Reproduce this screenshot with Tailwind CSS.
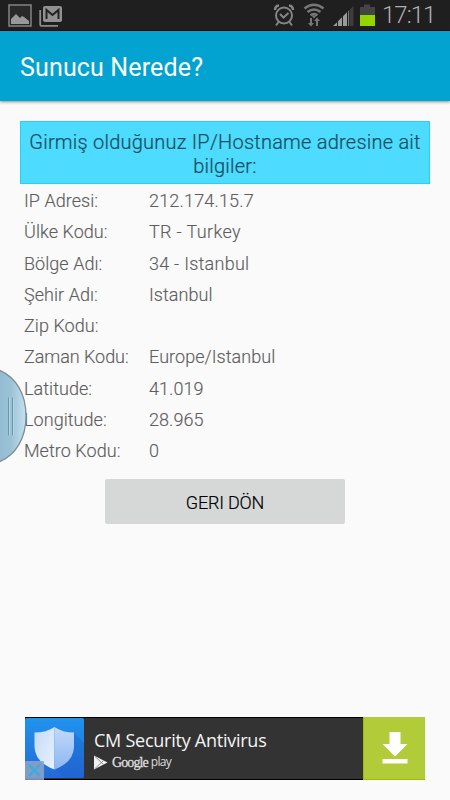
<!DOCTYPE html>
<html lang="tr">
<head>
    <meta charset="UTF-8">
    <meta name="viewport" content="width=device-width, initial-scale=1.0">
    <title>Sunucu Nerede?</title>
    <script src="https://cdn.jsdelivr.net/npm/@tailwindcss/browser@4"></script>
</head>
<body class="relative flex flex-col w-[450px] h-[800px] overflow-hidden bg-[#fafafa] font-['Roboto',sans-serif]">
    <!-- Status bar -->
    <div class="flex items-start justify-between h-[31px] shrink-0 bg-[#1f1f1f] border-b border-[#1c1010] pl-2">
        <div class="flex gap-[7px] pt-1">
            <svg class="w-6 h-[23px]" viewBox="0 0 24 23">
                <rect x="1" y="1" width="22" height="21" fill="#292929" stroke="#7d7d7d" stroke-width="1.6"/>
                <path d="M3 20v-5l3-3 2-2 4 4 2-2 2 1 5 4v3z" fill="#999"/>
            </svg>
            <svg class="w-[23px] h-[21px] mt-0.5" viewBox="0 0 23 21">
                <path d="M1.2 4v14.500q0 1.300 1.300 1.300H19" fill="none" stroke="#8c8c8c" stroke-width="1.8"/>
                <rect x="4" y="0" width="19" height="16" rx="2" fill="#929292"/>
                <path d="M7.500 13V4l6 5 6-5v9" fill="none" stroke="#222" stroke-width="2"/>
            </svg>
        </div>
        <div class="flex">
            <svg class="w-[104px] h-[30px]" viewBox="272 0 104 30">
                <g fill="none" stroke="#858585" stroke-width="2">
                    <circle cx="284" cy="15.500" r="8"/>
                    <path d="M280 14l3.500 3.500 5-4.500M278.500 22l-2.500 3.500M289.500 22l2.500 3.500"/>
                    <path d="M275 10q0-4 4-4.500M293 10q0-4-4-4.500" stroke-width="2.400"/>
                </g>
                <g fill="none" stroke="#777" stroke-width="2.600">
                    <path d="M304.500 8.500q9.500-7.500 19 0M307.500 12q6.500-5 13 0M310.500 15.300q3.500-2.500 7 0"/>
                </g>
                <path d="M311.500 15.500h5l-2.500 3zM310 18h2v5h2l-3 3.500-3-3.500h2zM316 26v-5h-2l3-3.500 3 3.500h-2v5z" fill="#777"/>
                <path d="M333 26l4-3.800V26zM338 26v-4.800l4-4V26zM343 26v-9.800l4-4V26z" fill="#999"/>
                <path d="M348 26V11.200l1-.8V26z" fill="#777"/>
                <path d="M349.500 26V10l4-4v20z" fill="#3d3d3d"/>
                <path d="M360 15V7h4V4.500h6V7h5v8z" fill="#444"/>
                <path d="M360 15h15v11h-15z" fill="#94d500"/>
            </svg>
            <span class="ml-[6px] w-[68px] pt-px text-[24px] leading-[29px] font-light tracking-[-1px] text-[#b0b0b0] whitespace-nowrap">17:11</span>
        </div>
    </div>

    <!-- Action bar -->
    <header class="flex items-center h-[70px] shrink-0 bg-[#02a3d0] pl-[20px] pt-1 shadow-[0_1px_3px_rgba(0,0,0,0.45)]">
        <h1 class="text-[25px] text-white whitespace-nowrap tracking-[0.15px]">Sunucu Nerede?</h1>
    </header>

    <!-- Lookup result -->
    <main class="flex flex-col px-5 pt-5">
        <div class="h-[63px] bg-[#4ddbff] border border-[#22d3f8] pt-[8px] text-center text-[20px] leading-[24px] font-light tracking-[0.23px] text-[#174f5c] [-webkit-text-stroke:0.2px_#174f5c] whitespace-nowrap">
            Girmiş olduğunuz IP/Hostname adresine ait<br>bilgiler:
        </div>
        <dl class="grid grid-cols-[125px_1fr] auto-rows-[31.25px] items-center pl-1 pt-px text-[18px] font-light tracking-[0.05px] text-[#5e5e5e] [-webkit-text-stroke:0.15px_#5e5e5e] whitespace-nowrap">
            <dt>IP Adresi:</dt><dd class="tracking-[0.18px]">212.174.15.7</dd>
            <dt>Ülke Kodu:</dt><dd class="tracking-[0.35px]">TR - Turkey</dd>
            <dt>Bölge Adı:</dt><dd class="tracking-[0.25px]">34 - Istanbul</dd>
            <dt>Şehir Adı:</dt><dd>Istanbul</dd>
            <dt>Zip Kodu:</dt><dd></dd>
            <dt class="tracking-[-0.05px]">Zaman Kodu:</dt><dd>Europe/Istanbul</dd>
            <dt>Latitude:</dt><dd>41.019</dd>
            <dt>Longitude:</dt><dd>28.965</dd>
            <dt>Metro Kodu:</dt><dd>0</dd>
        </dl>
        <button class="self-center mt-[13px] w-60 h-[45px] rounded-[2px] bg-[#d6d8d7] pt-0.5 text-[18px] font-light tracking-[-0.2px] text-black [-webkit-text-stroke:0.2px_#000]">GERI DÖN</button>
    </main>

    <!-- Side handle, drawn over the list -->
    <svg class="absolute left-0 top-[366px] w-7 h-[100px]" viewBox="0 0 28 100">
        <defs>
            <linearGradient id="handle" x1="0" x2="1" y1="0" y2="0">
                <stop offset="0" stop-color="#93bbd2"/>
                <stop offset=".45" stop-color="#9bc3d8"/>
                <stop offset="1" stop-color="#c5e2ef"/>
            </linearGradient>
        </defs>
        <path d="M-1 4C16 11 26 28 26 50S16 89-1 96z" fill="url(#handle)" stroke="#858b8f" stroke-width="1.300"/>
        <path d="M8.500 31.500v38M12.500 31.500v38" stroke="#6796ad" stroke-width="1"/>
        <path d="M9.500 31.500v38M13.500 31.500v38" stroke="#b4d6e5" stroke-width="1"/>
    </svg>

    <!-- Ad banner -->
    <div class="relative flex mt-auto mb-5 ml-[25px] w-[400px] h-[63px] bg-[#333] border-y border-black">
        <svg class="w-[59px] h-[60px]" viewBox="0 0 59 60">
            <defs>
                <linearGradient id="tile" x1="0" x2="0" y1="0" y2="1">
                    <stop offset="0" stop-color="#2093ed"/>
                    <stop offset="1" stop-color="#2469d8"/>
                </linearGradient>
                <linearGradient id="shieldLeft" x1="0" x2="1" y1="0" y2="1">
                    <stop offset="0" stop-color="#c3daf8"/>
                    <stop offset="1" stop-color="#e9f2fe"/>
                </linearGradient>
                <linearGradient id="shieldRight" x1="0" x2="0" y1="0" y2="1">
                    <stop offset="0" stop-color="#c3daf9"/>
                    <stop offset="1" stop-color="#8cb6f2"/>
                </linearGradient>
            </defs>
            <rect width="59" height="60" rx="2" fill="url(#tile)"/>
            <path d="M49 15l10 10v35H40l-10-9z" fill="#1b5dc5" opacity=".3"/>
            <path d="M29.500 9q-8 5.500-20 5.500v15q1 15 20 22z" fill="url(#shieldLeft)"/>
            <path d="M29.500 9q8 5.500 19.500 5.500v15q-1 15-19.500 22z" fill="url(#shieldRight)"/>
        </svg>
        <div class="flex-1 pl-[10px] pt-[10px] font-['Open_Sans',sans-serif] whitespace-nowrap">
            <div class="text-[18px] leading-[24px] tracking-[-0.25px] text-[#f4f4f4]">CM Security Antivirus</div>
            <div class="flex items-center h-[18px] mt-px text-[#dedede]">
                <svg class="w-[14px] h-[15px] mr-[4px]" viewBox="0 0 14 15">
                    <path d="M0 .5L13.500 7.500 0 14.500z" fill="#f2f2f2"/>
                    <path d="M.5 1l9 8.500M.5 14l9-8.500" stroke="#777" stroke-width=".8"/>
                </svg>
                <span class="font-['Liberation_Serif',serif] text-[14px] tracking-[-0.9px] [-webkit-text-stroke:0.3px_#dedede]">Google</span>
                <span class="ml-[3px] text-[12px] tracking-[-0.7px]">play</span>
            </div>
        </div>
        <div class="flex items-center justify-center w-[62px] -my-px bg-[#b1cb39] border-l border-b border-[#a5b900]">
            <svg class="w-[26px] h-[32px]" viewBox="0 0 26 32">
                <path d="M7.500 0h11v12H25.500L13 24.500.5 12h7zM.5 27h25v4.500H.5z" fill="#fff"/>
            </svg>
        </div>
        <svg class="absolute left-0 -bottom-px w-[19px] h-[19px]" viewBox="0 0 19 19">
            <path d="M0 0h19v19H0z" fill="#90a5c5" fill-opacity=".85"/>
            <path d="M4 4l11 11M15 4L4 15" stroke="#35aee0" stroke-width="2"/>
        </svg>
    </div>
</body>
</html>
